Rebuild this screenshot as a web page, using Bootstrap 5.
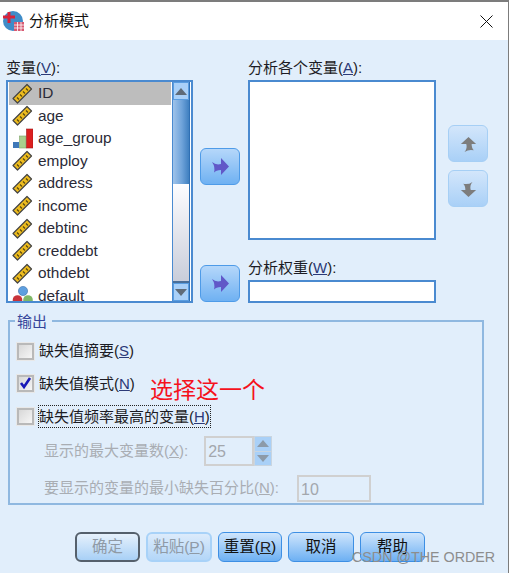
<!DOCTYPE html>
<html lang="zh-CN">
<head>
    <meta charset="UTF-8">
    <title>分析模式</title>
    <link href="https://cdn.jsdelivr.net/npm/bootstrap@5.3.3/dist/css/bootstrap.min.css" rel="stylesheet">
    <style>
        html, body { margin: 0; background: #fff; }
        body {
            width: 510px; height: 573px; overflow: hidden; position: relative;
            font-family: "Liberation Sans", "Noto Sans CJK SC", sans-serif;
            font-size: 15px; line-height: 18px; color: #1c1c24;
        }
        .spss-win { width: 509px; height: 573px; border-top: 2px solid #7c7c7c; border-right: 1px solid #7c7c7c; background: #fff; }
        .spss-title { height: 38px; padding-left: 3px; padding-right: 15px; color: #111; }
        .spss-title span { margin-left: 5px; font-size: 15px; }
        .spss-body { height: 533px; background: #e1eefb; padding: 18px 0 0 6px; }
        .u-key { text-decoration: underline; color: #2c3a78; }
        .field-label { height: 22px; line-height: 20px; white-space: nowrap; }
        .var-col { width: 187px; }
        .move-col { width: 55px; padding-left: 7px; }
        .target-col { width: 188px; }
        .order-col { padding: 67px 0 0 12px; gap: 8px; }
        .var-list { height: 223px; border: 2px solid #4a8ad0; background: #fff; overflow: hidden; }
        .var-rows { width: 163px; padding: 0 0 0 1px; flex: none; }
        .var-row { height: 22.5px; line-height: 22.5px; padding-left: 3px; gap: 5px; white-space: nowrap; color: #2b2b38; font-size: 15.4px; }
        .var-row.is-picked { background: #bdbdbd; }
        .var-row svg { flex: none; }
        .scroll-track { width: 18px; flex: none; margin-left: 1px; border-left: 1px solid #4a8ad0; border-right: 1px solid #2f6fb4; }
        .scroll-end { height: 18px; background: #a9d0f8; border: 1px solid #5a9de0; }
        .scroll-thumb { height: 84px; background: linear-gradient(90deg, #9fc3ea, #6fa3da 55%, #3f7fc0); }
        .scroll-rest { flex: 1; background: linear-gradient(#fdfdff, #c9cdda); border-bottom: 2px solid #4a6f98; }
        .target-box { height: 160px; border: 2px solid #4a8ad0; background: #fff; }
        .weight-box { height: 23px; border: 2px solid #4a8ad0; background: #fff; }
        .move-btn { width: 40px; height: 37px; border: 1px solid #4e9be8; border-radius: 6px; background: linear-gradient(#b5d7fa, #6fb1f2); padding: 0; }
        .move-first { margin-top: 90px; }
        .move-second { margin-top: 80px; }
        .order-btn { width: 40px; height: 37px; border: 1px solid #a6cff5; border-radius: 6px; background: linear-gradient(#d3e6fb, #a9d0f7); padding: 0; }
        .weight-label { margin-top: 18px; }
        .out-group { width: 476px; height: 185px; margin: 17px 0 0 2px; border: 2px solid #8fb8e0; padding: 13px 0 0 7px; position: relative; }
        .out-legend { position: absolute; left: 5px; top: -9px; padding: 0 5px 0 2px; background: #e1eefb; color: #35459a; }
        .opt-row { height: 32.5px; gap: 5px; }
        .fake-check { width: 17px; height: 17px; flex: none; border: 2px solid #b9b9b9; background: linear-gradient(135deg, #d8d8d8, #f6f6f6); outline: 1px solid #e8e8e8; }
        .dotted-focus { outline: 1px dotted #222; padding: 1px 0; line-height: 19px; }
        .dim-row { color: #a9adb3; margin-left: 27px; height: 37px; }
        .dim-row .u-key { color: #a9adb3; }
        .dim-input { height: 30px; border: 2px solid #d0d0d0; padding-left: 2px; line-height: 28px; color: #a3a7ad; font-size: 16px; }
        .dim-short { width: 50px; margin-left: 16px; }
        .dim-long { width: 74px; height: 27px; line-height: 25px; margin-left: 18px; }
        .spin-box { width: 18px; height: 30px; background: #a9d0f7; border: 1px solid #c9d5e0; }
        .spin-box i { flex: 1; position: relative; display: block; }
        .spin-box i + i { border-top: 1px solid #c9d5e0; }
        .foot-row { padding: 27px 0 0 69px; gap: 6px; }
        .dlg-btn { width: 66px; height: 30px; border: 1px solid #3d8fe4; border-radius: 6px; background: linear-gradient(#cfe5fc, #6db0f3); padding: 0; color: #111; font-size: 15.5px; line-height: 26px; white-space: nowrap; }
        .dlg-btn .u-key { color: #222; }
        .btn-ok { width: 65px; border: 2px solid #55606c; color: #8f9aa6; background: linear-gradient(#e6f1fc, #a8d0f6); }
        .btn-paste { border: 2px solid #a8d2f8; color: #8f9aa6; background: linear-gradient(#dcebfb, #b3d6f8); }
        .btn-paste .u-key { color: #8f9aa6; }
        .btn-reset { width: 64px; }
        .btn-help { width: 65px; }
        .note-red { position: absolute; left: 150px; top: 376px; color: #f5121d; font-size: 23px; line-height: 28px; }
        .wm-text { position: absolute; left: 352px; top: 548px; color: #8d8d8d; font-size: 14.3px; line-height: 18px; white-space: nowrap; }
    </style>
</head>
<body>
    <svg width="0" height="0" class="position-absolute">
        <defs>
            <g id="ic-scale">
                <path d="M1 15.500 L15 1.500 L19.500 6 L5.500 20 Z" fill="#eebc1e" stroke="#444" stroke-width="1.200" stroke-linejoin="round"/>
                <path d="M5 14.500l2 2M8 11.500l2 2M11 8.500l2 2M14 5.500l2 2" stroke="#5a4a10" stroke-width="1.200"/>
            </g>
            <g id="ic-ordinal">
                <rect x="1" y="14" width="6" height="6" fill="#3f78b8"/>
                <rect x="7.500" y="8" width="6.500" height="12" fill="#a9cf8e" stroke="#7fa56a" stroke-width=".6"/>
                <rect x="14.500" y="1" width="6.500" height="19" fill="#dc1f1f" stroke="#a01818" stroke-width=".6"/>
            </g>
            <g id="ic-nominal">
                <circle cx="11" cy="6" r="4.600" fill="#5d9fe0" stroke="#3a6ea8" stroke-width=".6"/>
                <circle cx="5.500" cy="15" r="4.800" fill="#c8333a"/>
                <circle cx="16" cy="15" r="4.800" fill="#7fb868"/>
            </g>
            <path id="ic-move" d="M1 5 Q5 8.500 10 7 V1 L18 9.500 L10 18 V13 Q5 13 3 15.500 Q4.500 10 1 5 Z"/>
        </defs>
    </svg>

    <div class="spss-win">
        <div class="spss-title d-flex align-items-center">
            <svg width="21" height="21" viewBox="0 0 21 21">
                <circle cx="10" cy="10" r="10" fill="#3f8cc8"/>
                <path d="M4.500 1h3v3.500H12v3H7.500V12h-3V7.500H0v-3h4.500z" fill="#d8233a"/>
                <rect x="11" y="11" width="10" height="9" fill="#d85a72"/>
                <path d="M11 14h10M11 17h10M14.500 11v9M18 11v9" stroke="#fff" stroke-width=".8"/>
            </svg>
            <span>分析模式</span>
            <svg class="ms-auto" width="13" height="13" viewBox="0 0 13 13"><path d="M.5.500l12 12M12.500.500l-12 12" stroke="#111" stroke-width="1"/></svg>
        </div>
        <div class="spss-body">
            <div class="d-flex">
                <div class="var-col">
                    <div class="field-label">变量(<span class="u-key">V</span>):</div>
                    <div class="var-list d-flex">
                        <div class="var-rows">
                            <div class="var-row is-picked d-flex align-items-center"><svg width="21" height="21"><use href="#ic-scale"/></svg>ID</div>
                            <div class="var-row d-flex align-items-center"><svg width="21" height="21"><use href="#ic-scale"/></svg>age</div>
                            <div class="var-row d-flex align-items-center"><svg width="21" height="21"><use href="#ic-ordinal"/></svg>age_group</div>
                            <div class="var-row d-flex align-items-center"><svg width="21" height="21"><use href="#ic-scale"/></svg>employ</div>
                            <div class="var-row d-flex align-items-center"><svg width="21" height="21"><use href="#ic-scale"/></svg>address</div>
                            <div class="var-row d-flex align-items-center"><svg width="21" height="21"><use href="#ic-scale"/></svg>income</div>
                            <div class="var-row d-flex align-items-center"><svg width="21" height="21"><use href="#ic-scale"/></svg>debtinc</div>
                            <div class="var-row d-flex align-items-center"><svg width="21" height="21"><use href="#ic-scale"/></svg>creddebt</div>
                            <div class="var-row d-flex align-items-center"><svg width="21" height="21"><use href="#ic-scale"/></svg>othdebt</div>
                            <div class="var-row d-flex align-items-center"><svg width="21" height="21"><use href="#ic-nominal"/></svg>default</div>
                        </div>
                        <div class="scroll-track d-flex flex-column">
                            <div class="scroll-end d-flex align-items-center justify-content-center"><svg width="12" height="7"><path d="M6 0L12 7H0z" fill="#5f6b78"/></svg></div>
                            <div class="scroll-thumb"></div>
                            <div class="scroll-rest"></div>
                            <div class="scroll-end d-flex align-items-center justify-content-center"><svg width="12" height="7"><path d="M0 0H12L6 7z" fill="#5f6b78"/></svg></div>
                        </div>
                    </div>
                </div>
                <div class="move-col d-flex flex-column">
                    <button class="move-btn move-first" type="button"><svg width="19" height="19"><use href="#ic-move" fill="#6158c8"/></svg></button>
                    <button class="move-btn move-second" type="button"><svg width="19" height="19"><use href="#ic-move" fill="#6158c8"/></svg></button>
                </div>
                <div class="target-col">
                    <div class="field-label">分析各个变量(<span class="u-key">A</span>):</div>
                    <div class="target-box"></div>
                    <div class="field-label weight-label">分析权重(<span class="u-key">W</span>):</div>
                    <div class="weight-box"></div>
                </div>
                <div class="order-col d-flex flex-column">
                    <button class="order-btn" type="button"><svg width="17" height="17" viewBox="0 0 19 19"><use href="#ic-move" fill="#7d7d7d" transform="rotate(-90 9.500 9.500)"/></svg></button>
                    <button class="order-btn" type="button"><svg width="17" height="17" viewBox="0 0 19 19"><use href="#ic-move" fill="#7d7d7d" transform="rotate(90 9.500 9.500)"/></svg></button>
                </div>
            </div>

            <div class="out-group">
                <div class="out-legend">输出</div>
                <div class="opt-row d-flex align-items-center"><div class="fake-check"></div><span>缺失值摘要(<span class="u-key">S</span>)</span></div>
                <div class="opt-row d-flex align-items-center"><div class="fake-check d-flex"><svg width="13" height="13" viewBox="0 0 13 13"><path d="M2 6l3 4 6-9" fill="none" stroke="#1a1ab8" stroke-width="2.600"/></svg></div><span>缺失值模式(<span class="u-key">N</span>)</span></div>
                <div class="opt-row d-flex align-items-center"><div class="fake-check"></div><span class="dotted-focus">缺失值频率最高的变量(<span class="u-key">H</span>)</span></div>
                <div class="dim-row d-flex align-items-center">
                    <span>显示的最大变量数(<span class="u-key">X</span>):</span>
                    <div class="dim-input dim-short">25</div>
                    <div class="spin-box d-flex flex-column">
                        <i class="d-flex align-items-center justify-content-center"><svg width="12" height="7"><path d="M6 0L12 7H0z" fill="#8c9aa8"/></svg></i>
                        <i class="d-flex align-items-center justify-content-center"><svg width="12" height="7"><path d="M0 0H12L6 7z" fill="#8c9aa8"/></svg></i>
                    </div>
                </div>
                <div class="dim-row d-flex align-items-center">
                    <span>要显示的变量的最小缺失百分比(<span class="u-key">N</span>):</span>
                    <div class="dim-input dim-long">10</div>
                </div>
            </div>

            <div class="foot-row d-flex">
                <button class="dlg-btn btn-ok" type="button">确定</button>
                <button class="dlg-btn btn-paste" type="button">粘贴(<span class="u-key">P</span>)</button>
                <button class="dlg-btn btn-reset" type="button">重置(<span class="u-key">R</span>)</button>
                <button class="dlg-btn" type="button">取消</button>
                <button class="dlg-btn btn-help" type="button">帮助</button>
            </div>
        </div>
    </div>
    <div class="note-red">选择这一个</div>
    <div class="wm-text">CSDN @THE ORDER</div>
</body>
</html>
